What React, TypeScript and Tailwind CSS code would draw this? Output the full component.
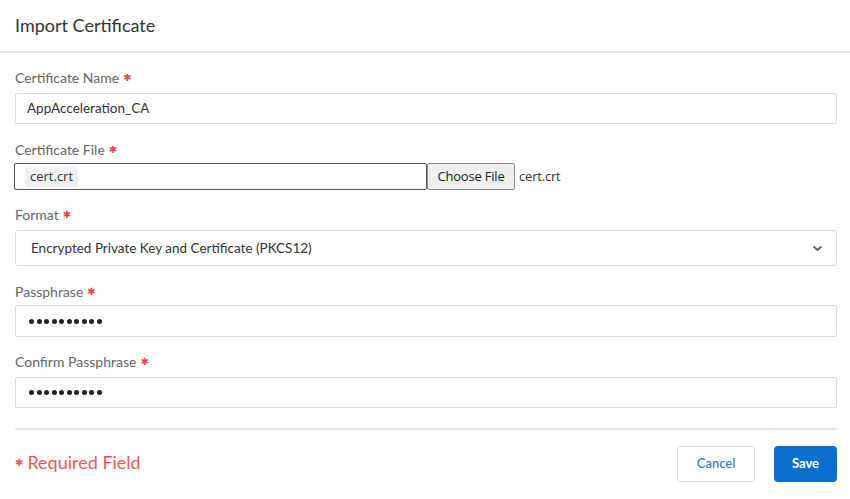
import React from "react";

function Label({ text }: { text: string }) {
  return (
    <div className="h-[16px] leading-[16px] text-[14px] text-[#666] flex items-center">
      <span>{text}</span>
      <span className="ml-[4px] text-[10px] text-[#e5484d] font-['DejaVu_Sans']">✱</span>
    </div>
  );
}

function Dots() {
  return (
    <div className="flex items-center gap-[2.5px] pl-[13px]">
      {Array.from({ length: 10 }).map((_, i) => (
        <span key={i} className="block w-[5px] h-[5px] rounded-full bg-[#222]" />
      ))}
    </div>
  );
}

export default function App() {
  return (
    <div className="w-[850px] h-[499px] bg-white overflow-hidden font-['Lato',sans-serif]">
      <div className="h-[53px] flex items-center px-[15px] text-[18px] text-[#333] border-b-2 border-[#e4e4e4]">
        Import Certificate
      </div>
      <div className="pl-[15px] pr-[13px]">
        <div className="mt-[17px]">
          <Label text="Certificate Name" />
        </div>
        <div className="mt-[7px] h-[31px] border border-[#dcdcdc] rounded-[2px] flex items-center pl-[11px] text-[13.5px] text-[#333]">
          AppAcceleration_CA
        </div>

        <div className="mt-[18px]">
          <Label text="Certificate File" />
        </div>
        <div className="mt-[5px] h-[27px] flex items-center">
          <div className="w-[413px] h-[27px] -ml-[1px] border border-[#555] rounded-[2px] flex items-center pl-[10px]">
            <span className="h-[20px] px-[5px] rounded-[3px] bg-[#eef1f4] text-[13px] text-[#333] flex items-center font-['Open_Sans',sans-serif]">
              cert.crt
            </span>
          </div>
          <div className="w-[88px] h-[27px] border border-[#8a8a8a] rounded-[2px] bg-[#efefef] flex items-center justify-center text-[13px] text-[#222] font-['Open_Sans',sans-serif] tracking-[-0.2px]">
            Choose File
          </div>
          <span className="ml-[4px] text-[13px] text-[#333] font-['Open_Sans',sans-serif] tracking-[-0.2px]">cert.crt</span>
        </div>

        <div className="mt-[17px]">
          <Label text="Format" />
        </div>
        <div className="mt-[7px] h-[36px] border border-[#dcdcdc] rounded-[3px] flex items-center justify-between pl-[15px] pr-[13px] text-[13.5px] text-[#333]">
          <span>Encrypted Private Key and Certificate (PKCS12)</span>
          <svg width="11" height="7" viewBox="0 0 11 7">
            <path d="M1.5 1.5 L5.5 5 L9.5 1.5" fill="none" stroke="#666" strokeWidth="2" />
          </svg>
        </div>

        <div className="mt-[18px]">
          <Label text="Passphrase" />
        </div>
        <div className="mt-[5px] h-[32px] border border-[#dcdcdc] rounded-[2px] flex items-center">
          <Dots />
        </div>

        <div className="mt-[17px]">
          <Label text="Confirm Passphrase" />
        </div>
        <div className="mt-[7px] h-[31px] border border-[#dcdcdc] rounded-[2px] flex items-center">
          <Dots />
        </div>

        <div className="mt-[20px] h-[2px] bg-[#e4e4e4]" />

        <div className="mt-[16px] h-[36px] flex items-center justify-between">
          <div className="flex items-center text-[#e8585c] pb-[3px]">
            <span className="text-[10px] font-['DejaVu_Sans']">✱</span>
            <span className="ml-[4px] text-[18px]">Required Field</span>
          </div>
          <div className="flex items-center gap-[19px]">
            <button className="w-[78px] h-[36px] border border-[#dcdcdc] rounded-[4px] bg-white text-[13px] text-[#2b7bd1] font-medium">
              Cancel
            </button>
            <button className="w-[63px] h-[36px] rounded-[4px] bg-[#0a6fcc] text-[13px] text-white font-bold">
              Save
            </button>
          </div>
        </div>
      </div>
    </div>
  );
}
